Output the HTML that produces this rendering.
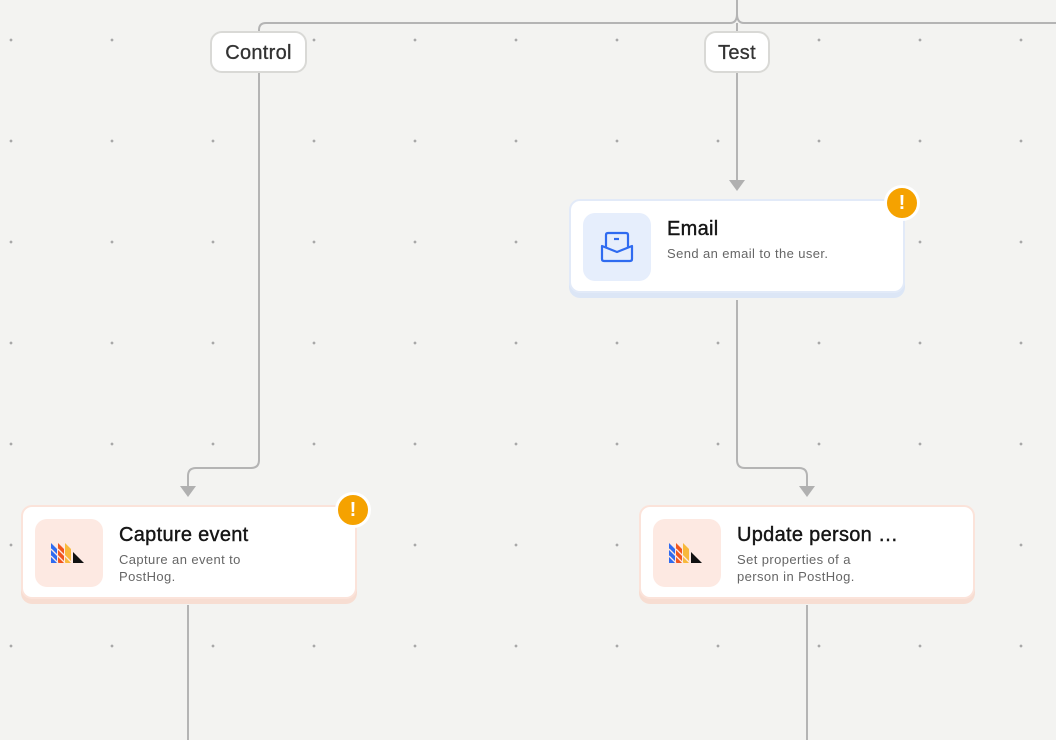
<!DOCTYPE html>
<html><head><meta charset="utf-8"><style>
body{margin:0;width:1056px;height:740px;overflow:hidden;background:#f3f3f1;font-family:"Liberation Sans",sans-serif;position:relative;
background-image:radial-gradient(circle,#a8a8a8 1.2px,transparent 1.6px);background-size:101px 101px;background-position:-39.5px -10.5px;}
.abs{position:absolute}
.label{position:absolute;background:#fff;border:2px solid #d9d9d6;border-radius:12px;font-size:20px;color:#333;height:42px;line-height:41px;top:31px;text-align:center;box-sizing:border-box;letter-spacing:.3px;-webkit-text-stroke:.3px #333}
.card{position:absolute;width:336px;height:94px;background:#fff;border-radius:11px;box-sizing:border-box}
.card .ic{position:absolute;left:12px;top:12px;width:68px;height:68px;border-radius:12px}
.card .t{position:absolute;left:96px;top:17px;font-size:20px;color:#151515;letter-spacing:.3px;-webkit-text-stroke:.4px #151515}
.card .d{position:absolute;left:96px;top:44px;font-size:13px;color:#666;line-height:17px;letter-spacing:.4px}
.badge{position:absolute;width:30px;height:30px;border-radius:50%;background:#f5a200;border:3px solid #fff;color:#fff;font-weight:bold;font-size:20px;text-align:center;line-height:30px}
</style></head><body>
<svg class="abs" style="left:0;top:0" width="1056" height="740">
<g fill="none" stroke="#b4b4b4" stroke-width="2">
<path d="M259 31 L259 30 Q259 23 266 23 L730 23 Q737 23 737 14 L737 0"/>
<path d="M737 14 Q737 23 744 23 L1056 23"/>
<path d="M737 23 L737 182"/>
<path d="M259 69 L259 460 Q259 468 251 468 L196 468 Q188 468 188 476 L188 488"/>
<path d="M737 300 L737 460 Q737 468 745 468 L799 468 Q807 468 807 476 L807 488"/>
<path d="M188 605 L188 740"/>
<path d="M807 605 L807 740"/>
</g>
<g fill="#b0b0b0">
<path d="M729 180 L745 180 L737 191Z"/>
<path d="M180 486 L196 486 L188 497Z"/>
<path d="M799 486 L815 486 L807 497Z"/>
</g>
</svg>
<div class="label" style="left:210px;width:97px">Control</div>
<div class="label" style="left:704px;width:66px">Test</div>

<div class="card" style="left:569px;top:199px;border:2px solid #e2eaf8;box-shadow:0 5px 0 #dce6f6">
 <div class="ic" style="background:#e6eefc">
  <svg width="68" height="68" viewBox="0 0 68 68"><g fill="none" stroke="#2f6bf0" stroke-width="2.2" stroke-linejoin="round"><path d="M23 35 V22 Q23 20 25 20 H43 Q45 20 45 22 V35"/><path d="M19 33 L34 39 L49 33 V46 Q49 48 47 48 H21 Q19 48 19 46Z"/><path d="M31 26 H36"/></g></svg>
 </div>
 <div class="t">Email</div>
 <div class="d">Send an email to the user.</div>
</div>
<div class="badge" style="left:884px;top:185px">!</div>

<div class="card" style="left:21px;top:505px;border:2px solid #fbe3da;box-shadow:0 5px 0 #f7ddd2">
 <div class="ic" style="background:#fde9e2">
  <svg width="68" height="68" viewBox="0 0 68 68"><g transform="translate(16,24)">
   <path d="M0 0 L6 6 V20 H0Z" fill="#2f6bf0"/><path d="M7 0 L13 6 V20 H7Z" fill="#f1561d"/><path d="M14 0 L20 6 V20 H14Z" fill="#f8b93b"/><path d="M22 9 L33 20 H22Z" fill="#111"/>
   <g stroke="#fde9e2" stroke-width="1.3"><path d="M0 6 L14 20 M0 13 L7 20 M7 6 L21 20 M7 13 L14 20 M14 13 L21 20"/></g></g></svg>
 </div>
 <div class="t">Capture event</div>
 <div class="d">Capture an event to<br>PostHog.</div>
</div>
<div class="badge" style="left:335px;top:492px">!</div>

<div class="card" style="left:639px;top:505px;border:2px solid #fbe3da;box-shadow:0 5px 0 #f7ddd2">
 <div class="ic" style="background:#fde9e2">
  <svg width="68" height="68" viewBox="0 0 68 68"><g transform="translate(16,24)">
   <path d="M0 0 L6 6 V20 H0Z" fill="#2f6bf0"/><path d="M7 0 L13 6 V20 H7Z" fill="#f1561d"/><path d="M14 0 L20 6 V20 H14Z" fill="#f8b93b"/><path d="M22 9 L33 20 H22Z" fill="#111"/>
   <g stroke="#fde9e2" stroke-width="1.3"><path d="M0 6 L14 20 M0 13 L7 20 M7 6 L21 20 M7 13 L14 20 M14 13 L21 20"/></g></g></svg>
 </div>
 <div class="t">Update person …</div>
 <div class="d">Set properties of a<br>person in PostHog.</div>
</div>
</body></html>
